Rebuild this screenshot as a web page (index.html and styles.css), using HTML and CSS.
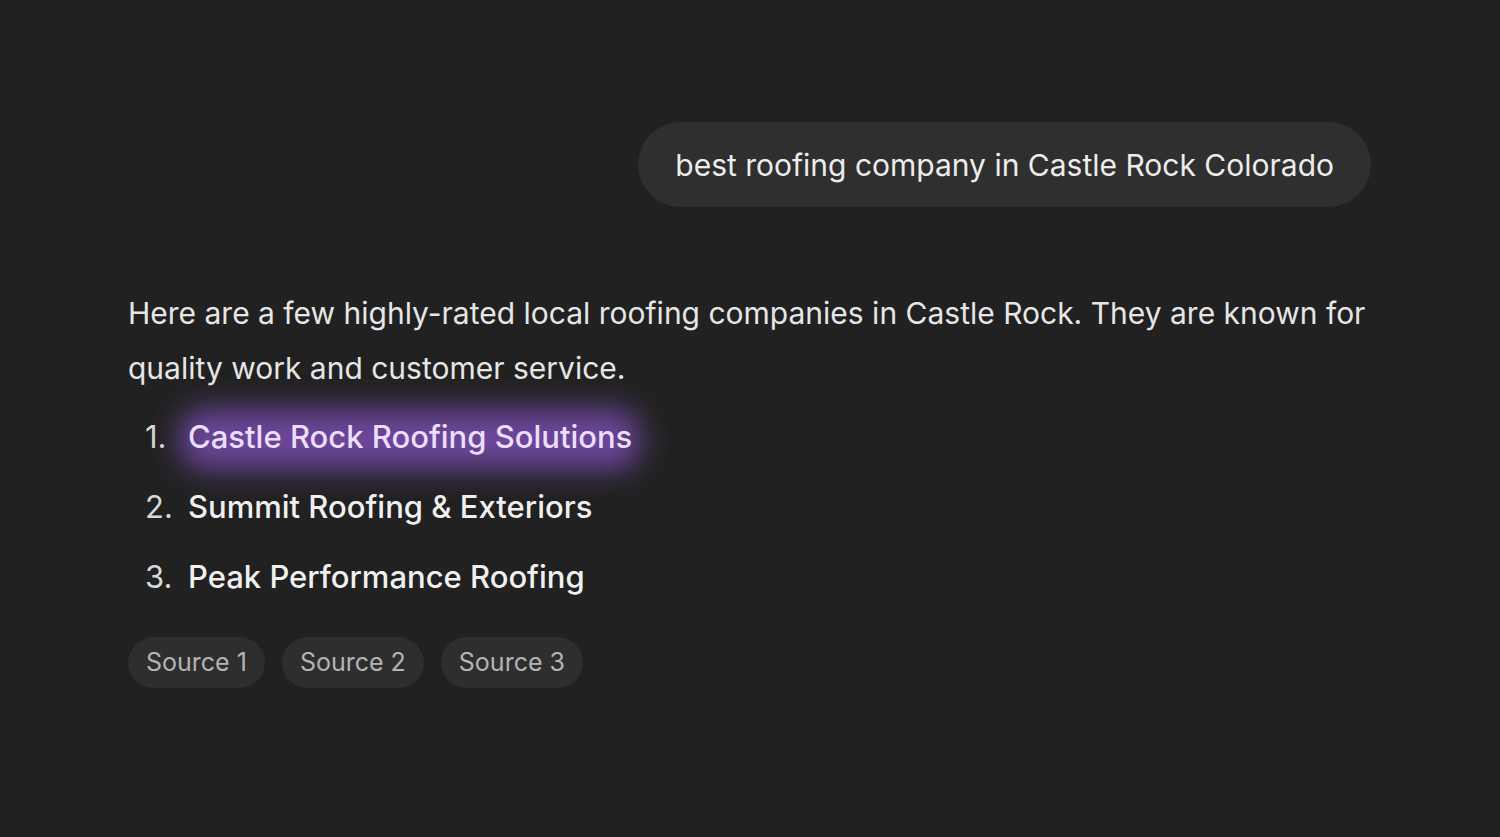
FILE: index.html
```html
<!DOCTYPE html>
<html lang="en">
<head>
<meta charset="utf-8">
<title>Chat</title>
<link rel="stylesheet" href="styles.css">
</head>
<body>
<main class="thread">
  <div class="user-row">
    <div class="bubble">best roofing company in Castle Rock Colorado</div>
  </div>
  <div class="answer">
    <p class="intro">Here are a few highly-rated local roofing companies in Castle Rock. They are known for quality work and customer service.</p>
    <ol class="results">
      <li><span class="num">1.</span><span class="name highlight">Castle Rock Roofing Solutions</span></li>
      <li><span class="num">2.</span><span class="name">Summit Roofing &amp; Exteriors</span></li>
      <li><span class="num">3.</span><span class="name">Peak Performance Roofing</span></li>
    </ol>
    <div class="sources">
      <span class="chip">Source 1</span>
      <span class="chip">Source 2</span>
      <span class="chip">Source 3</span>
    </div>
  </div>
</main>
</body>
</html>
```
FILE: styles.css
```css
html, body {
  margin: 0;
  height: 100%;
  background: #212121;
}
body {
  font-family: Inter, "Noto Sans", sans-serif;
  color: #ececec;
  -webkit-font-smoothing: antialiased;
}
.thread {
  padding: 122px 129px 0 128px;
  display: flex;
  flex-direction: column;
}
.user-row {
  display: flex;
  justify-content: flex-end;
}
.bubble {
  background: #2f2f2f;
  border-radius: 43px;
  height: 85px;
  display: flex;
  align-items: center;
  padding: 0 37px;
  font-size: 30px;
  color: #ececec;
}
.answer {
  margin-top: 79px;
}
.intro {
  margin: 0;
  font-size: 30px;
  line-height: 55px;
  color: #e6e6e6;
}
.results {
  list-style: none;
  margin: 17px 0 0;
  padding: 0 0 0 17px;
  display: flex;
  flex-direction: column;
  gap: 22px;
}
.results li {
  display: flex;
  align-items: baseline;
  height: 48px;
  line-height: 48px;
  font-size: 31px;
}
.num {
  width: 43px;
  color: #d8d8d8;
  font-weight: 400;
}
.name {
  font-weight: 500;
  color: #f0f0f0;
}
/* soft purple glow behind the featured result */
.highlight {
  position: relative;
  z-index: 0;
  color: #ecdefa;
}
.highlight::before {
  content: "";
  position: absolute;
  inset: -4px -8px -8px -8px;
  z-index: -1;
  border-radius: 24px;
  background: rgba(122, 78, 178, 0.85);
  filter: blur(15px);
}
.sources {
  display: flex;
  gap: 17px;
  margin-top: 36px;
}
.chip {
  background: #2e2e2e;
  color: #b4b4b4;
  font-size: 25px;
  height: 51px;
  line-height: 51px;
  padding: 0 18px;
  border-radius: 26px;
}
```
